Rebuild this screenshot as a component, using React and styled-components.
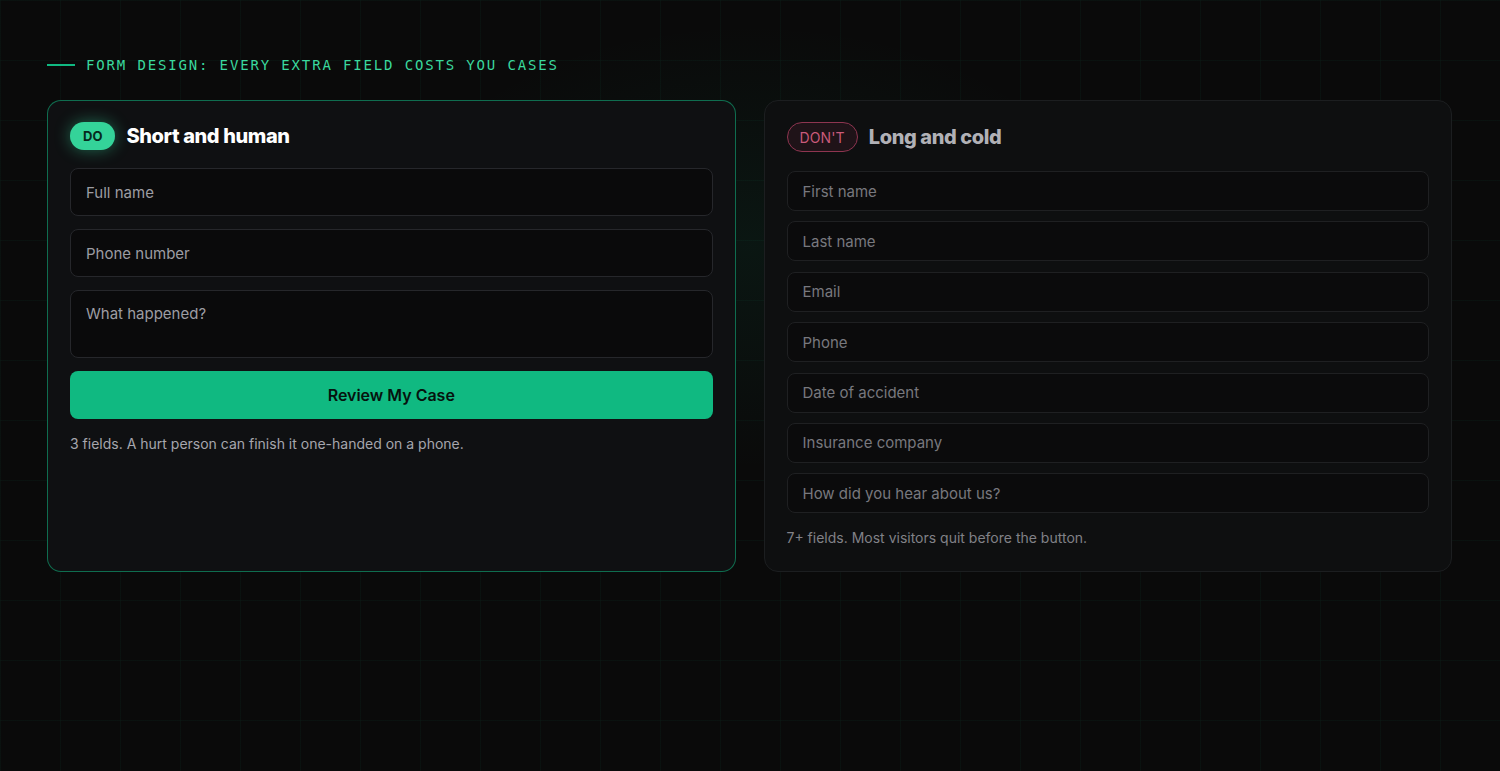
import styled, { createGlobalStyle, css } from "styled-components";

const Global = createGlobalStyle`
    html, body {
        margin: 0;
        padding: 0;
        background: #0a0a0a;
    }
    body {
        font-family: Inter, "Noto Sans", "Liberation Sans", sans-serif;
        color: #e4e4e7;
    }
    * { box-sizing: border-box; }
`;

const Page = styled.div`
    min-height: 100vh;
    padding: 57px 48px 48px 47px;
    background-color: #0a0a0a;
    background-image:
        radial-gradient(ellipse 520px 320px at 50% 32%, rgba(16, 185, 129, 0.07), transparent 70%),
        linear-gradient(rgba(16, 185, 129, 0.045) 1px, transparent 1px),
        linear-gradient(90deg, rgba(16, 185, 129, 0.045) 1px, transparent 1px);
    background-size: 100% 100%, 60px 60px, 60px 60px;
`;

const Eyebrow = styled.div`
    display: flex;
    align-items: center;
    gap: 11px;
    height: 16px;
    font-family: "DejaVu Sans Mono", "Liberation Mono", monospace;
    font-size: 14px;
    font-weight: 400;
    letter-spacing: 1.85px;
    text-transform: uppercase;
    color: #3ad89e;
    &::before {
        content: "";
        width: 28px;
        height: 2px;
        background: #10b981;
    }
`;

const Grid = styled.div`
    display: grid;
    grid-template-columns: 1fr 1fr;
    gap: 28px;
    margin-top: 27px;
`;

const Card = styled.div`
    border-radius: 14px;
    padding: 21px 22px 23px;
    display: flex;
    flex-direction: column;
    ${(p) =>
        p.$good
            ? css`
                  background: #0f1012;
                  border: 1px solid rgba(16, 185, 129, 0.55);
              `
            : css`
                  background: #0e0f10;
                  border: 1px solid #1c1e20;
              `}
`;

const Header = styled.div`
    display: flex;
    align-items: center;
    gap: 11px;
    margin-bottom: ${(p) => (p.$good ? "18px" : "19px")};
`;

const Badge = styled.span`
    display: inline-flex;
    align-items: center;
    justify-content: center;
    border-radius: 999px;
    ${(p) =>
        p.$good
            ? css`
                  height: 28px;
                  padding: 0 13px;
                  background: #34d399;
                  color: #06291d;
                  font-size: 13px;
                  font-weight: 700;
                  box-shadow: 0 0 16px rgba(52, 211, 153, 0.45);
              `
            : css`
                  height: 30px;
                  padding: 0 12px;
                  background: rgba(190, 60, 95, 0.1);
                  border: 1px solid #8e3550;
                  color: #c95a7a;
                  font-size: 14px;
                  font-weight: 400;
                  letter-spacing: 0.01em;
              `}
`;

const Title = styled.h3`
    margin: 0;
    font-size: 20px;
    font-weight: 800;
    letter-spacing: -0.02em;
    color: ${(p) => (p.$good ? "#ffffff" : "#b1b1b6")};
`;

const Fields = styled.div`
    display: flex;
    flex-direction: column;
    gap: ${(p) => (p.$good ? "13px" : "10.4px")};
`;

const fieldBase = css`
    width: 100%;
    display: block;
    font-family: inherit;
    font-size: 15px;
    border-radius: 8px;
    outline: none;
    resize: none;
    padding: 0 15px;
    ${(p) =>
        p.$good
            ? css`
                  background: #0a0a0b;
                  border: 1px solid #26272b;
                  color: #e4e4e7;
                  &::placeholder { color: #9d9da3; }
              `
            : css`
                  background: #0b0b0c;
                  border: 1px solid #1f2022;
                  color: #a1a1aa;
                  &::placeholder { color: #78787e; }
              `}
`;

const Input = styled.input`
    ${fieldBase}
    height: ${(p) => (p.$good ? "48px" : "40px")};
`;

const TextArea = styled.textarea`
    ${fieldBase}
    height: 68px;
    padding-top: 13px;
    line-height: 20px;
`;

const Submit = styled.button`
    margin-top: 13px;
    height: 48px;
    width: 100%;
    border: none;
    border-radius: 8px;
    background: #10b981;
    color: #06130e;
    font-family: inherit;
    font-size: 16px;
    font-weight: 600;
    cursor: pointer;
`;

const Note = styled.p`
    margin: 15px 0 0;
    font-size: 14px;
    line-height: 20px;
    color: ${(p) => (p.$good ? "#a6a6ad" : "#818187")};
`;

const goodFields = ["Full name", "Phone number"];
const badFields = [
    "First name",
    "Last name",
    "Email",
    "Phone",
    "Date of accident",
    "Insurance company",
    "How did you hear about us?",
];

export default function App() {
    return (
        <>
            <Global />
            <Page>
                <Eyebrow>Form design: every extra field costs you cases</Eyebrow>
                <Grid>
                    <Card $good>
                        <Header $good>
                            <Badge $good>DO</Badge>
                            <Title $good>Short and human</Title>
                        </Header>
                        <Fields $good>
                            {goodFields.map((f) => (
                                <Input $good key={f} placeholder={f} />
                            ))}
                            <TextArea $good placeholder="What happened?" />
                        </Fields>
                        <Submit>Review My Case</Submit>
                        <Note $good>3 fields. A hurt person can finish it one-handed on a phone.</Note>
                    </Card>
                    <Card>
                        <Header>
                            <Badge>DON'T</Badge>
                            <Title>Long and cold</Title>
                        </Header>
                        <Fields>
                            {badFields.map((f) => (
                                <Input key={f} placeholder={f} />
                            ))}
                        </Fields>
                        <Note>7+ fields. Most visitors quit before the button.</Note>
                    </Card>
                </Grid>
            </Page>
        </>
    );
}
